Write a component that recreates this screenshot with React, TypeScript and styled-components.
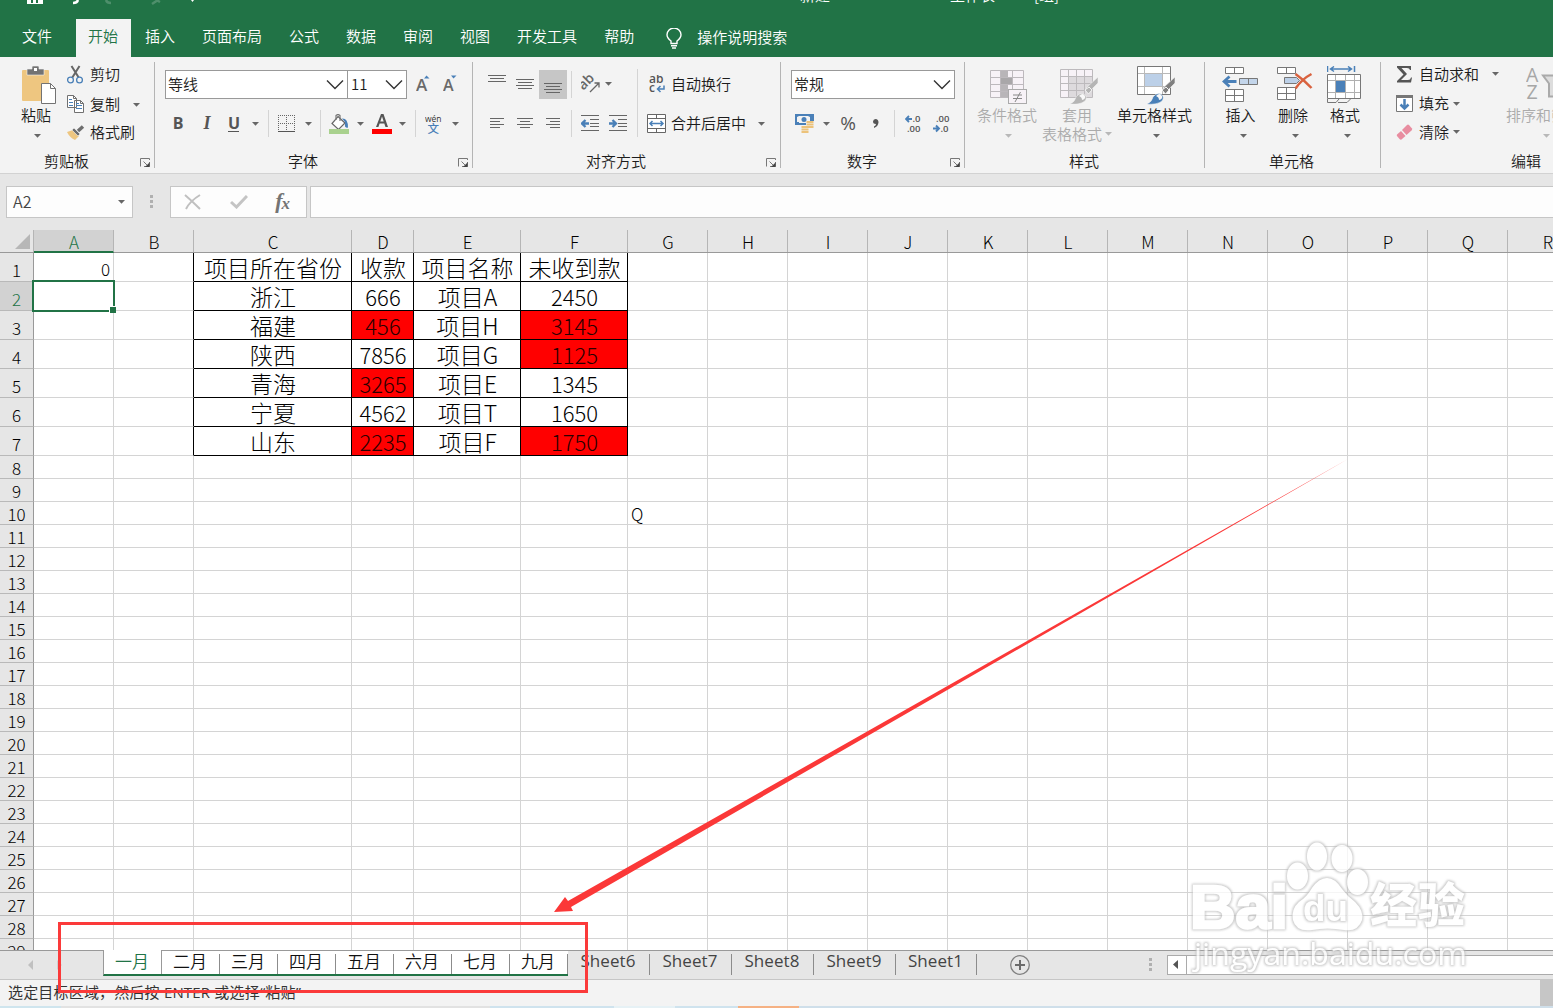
import React from "react";
import styled, { createGlobalStyle } from "styled-components";

const GREEN = "#217346";
const UI = `"Noto Sans CJK SC", "Noto Sans", sans-serif`;
const LATIN = `"Open Sans", "Noto Sans CJK SC", sans-serif`;
const BLUE = "#4a80b8";

const Global = createGlobalStyle`
  * { box-sizing: border-box; }
  body { margin: 0; overflow: hidden; font-family: ${UI}; }
`;

const App_ = styled.div`
  position: relative;
  width: 1553px;
  height: 1008px;
  overflow: hidden;
  display: flex;
  flex-direction: column;
  background: #e6e6e6;
  font-size: 15px;
  font-weight: 350;
  color: #1c1c1c;
  white-space: nowrap;
`;

/* ---------- title and tabs ---------- */
const TitleBar = styled.div`
  flex: none;
  height: 19px;
  background: ${GREEN};
  color: #fff;
  display: flex;
  align-items: flex-start;
  overflow: hidden;
`;
const TitleText = styled.span<{ $gap: number; $w: number }>`
  flex: none;
  width: ${(p) => p.$w}px;
  margin-left: ${(p) => p.$gap}px;
  margin-top: -13px;
  line-height: 16px;
`;
const TabRow = styled.nav`
  flex: none;
  height: 38px;
  background: ${GREEN};
  display: flex;
  align-items: center;
  padding-left: 22px;
`;
const MenuItem = styled.span<{ $gap?: number; $y?: number }>`
  color: #fff;
  margin-left: ${(p) => p.$gap ?? 27}px;
  line-height: 20px;
  padding-top: ${(p) => p.$y ?? 0}px;
  margin-top: -5px;
`;
const ActiveMenu = styled.span`
  width: 55px;
  height: 38px;
  margin-left: 24px;
  background: #f3f3f3;
  color: ${GREEN};
  text-align: center;
  line-height: 33px;
  padding-right: 1px;
`;

/* ---------- ribbon ---------- */
const Ribbon = styled.div`
  flex: none;
  height: 117px;
  background: #f3f3f3;
  border-bottom: 1px solid #d2d2d2;
  display: flex;
`;
const GroupBox = styled.section<{ $w: number }>`
  flex: none;
  width: ${(p) => p.$w}px;
  height: 116px;
  display: flex;
  flex-direction: column;
  background: linear-gradient(#b4b4b4, #b4b4b4) right 5px / 1px 106px no-repeat;
`;
const GroupBody = styled.div<{ $top?: number }>`
  height: 92px;
  display: flex;
  padding-top: ${(p) => p.$top ?? 0}px;
`;
const GroupFoot = styled.footer<{ $x: number }>`
  height: 24px;
  display: flex;
  align-items: center;
  padding-left: ${(p) => p.$x}px;
  line-height: 24px;
`;
const LaunchSlot = styled.span`
  margin-left: auto;
  padding-right: 4px;
  display: flex;
  padding-top: 4px;
`;
const Stack = styled.div<{ $gap?: number; $x?: number }>`
  display: flex;
  flex-direction: column;
  flex: none;
  gap: ${(p) => p.$gap ?? 0}px;
  padding-left: ${(p) => p.$x ?? 0}px;
`;
const Line = styled.div<{ $h: number }>`
  height: ${(p) => p.$h}px;
  display: flex;
  align-items: center;
`;
const Svg = styled.svg<{ $gap?: number }>`
  flex: none;
  display: block;
  margin-left: ${(p) => p.$gap ?? 0}px;
`;
const Divider = styled.i<{ $gap: number; $h?: number }>`
  flex: none;
  width: 1px;
  height: ${(p) => p.$h ?? 27}px;
  margin-left: ${(p) => p.$gap}px;
  background: #d4d4d4;
`;
const CmdText = styled.span<{ $gap?: number }>`
  flex: none;
  margin-left: ${(p) => p.$gap ?? 0}px;
  line-height: 20px;
  margin-top: -1px;
`;
const BigTool = styled.div<{ $w: number; $dim?: boolean; $gap?: number }>`
  flex: none;
  width: ${(p) => p.$w}px;
  margin-left: ${(p) => p.$gap ?? 0}px;
  height: 92px;
  display: flex;
  flex-direction: column;
  align-items: center;
  color: ${(p) => (p.$dim ? "#ababab" : "#1c1c1c")};
`;
const BigArt = styled.div<{ $top?: number }>`
  height: 48px;
  display: flex;
  align-items: flex-start;
  padding-top: ${(p) => p.$top ?? 9}px;
`;
const BigLabel = styled.div`
  height: 19px;
  line-height: 19px;
  display: flex;
  align-items: center;
`;
const CaretSlot = styled.div<{ $shift?: number }>`
  height: 20px;
  padding-top: 10px;
  padding-left: ${(p) => p.$shift ?? 0}px;
`;
const Combo = styled.div<{ $w: number; $gap?: number }>`
  flex: none;
  width: ${(p) => p.$w}px;
  height: 29px;
  margin-left: ${(p) => p.$gap ?? 0}px;
  border: 1px solid #999;
  background: #fff;
  display: flex;
  align-items: center;
  justify-content: space-between;
  padding: 0 3px 0 2px;
`;
const ComboText = styled.span`
  line-height: 20px;
  margin-top: -1px;
`;
const Glyph = styled.span<{ $gap: number; $w: number; $italic?: boolean; $line?: boolean }>`
  flex: none;
  margin-left: ${(p) => p.$gap}px;
  width: ${(p) => p.$w}px;
  text-align: center;
  font: ${(p) => (p.$italic ? `italic bold 18px "Liberation Serif", serif` : `bold 16px "Open Sans", sans-serif`)};
  line-height: ${(p) => (p.$line ? 15 : 18)}px;
  margin-top: ${(p) => (p.$line ? 1 : -1)}px;
  border-bottom: ${(p) => (p.$line ? "1px solid #555" : "none")};
  color: #555;
`;
const PercentGlyph = styled.span`
  flex: none;
  margin: -2px 0 0 10px;
  width: 16px;
  font: 19px/20px "Open Sans", sans-serif;
  color: #555;
  display: flex;
  justify-content: center;
`;
const ActiveTool = styled.span`
  flex: none;
  width: 28px;
  height: 29px;
  margin-left: 5px;
  background: #c6c6c6;
  display: flex;
  padding: 13px 0 0 5px;
`;

/* ---------- formula bar ---------- */
const FormulaBar = styled.div`
  flex: none;
  height: 56px;
  display: flex;
  padding: 12px 0 0 6px;
`;
const Field = styled.div<{ $w: number; $gap?: number }>`
  flex: none;
  width: ${(p) => p.$w}px;
  height: 32px;
  margin-left: ${(p) => p.$gap ?? 0}px;
  background: #fdfdfd;
  border: 1px solid #c6c6c6;
  display: flex;
  align-items: center;
  color: #444;
  padding: 0 7px 0 6px;
  justify-content: space-between;
  font: 350 16px/28px ${UI};
`;
const CellName = styled.span`
  margin-top: -2px;
`;
const Fx = styled.span`
  font: italic bold 22px/24px "Liberation Serif", serif;
  color: #747474;
  letter-spacing: -1px;
  padding-right: 10px;
  sub { font-size: 17px; vertical-align: -1px; }
`;

/* ---------- sheet ---------- */
const Sheet = styled.main`
  position: relative;
  flex: none;
  height: 720px;
  width: 1553px;
  overflow: hidden;
  background: #fff;
`;
const HeadRow = styled.div`
  display: flex;
  height: 23px;
  width: 1600px;
  border-bottom: 1px solid #999;
  background: #e6e6e6;
`;
const Corner = styled.div`
  flex: none;
  width: 34px;
  height: 22px;
  padding: 4px 0 0 15px;
  border-right: 1px solid #b5b5b5;
`;
const ColHead = styled.div<{ $w: number; $on?: boolean }>`
  flex: none;
  width: ${(p) => p.$w}px;
  height: ${(p) => (p.$on ? 23 : 22)}px;
  padding-left: 1px;
  text-align: center;
  font-size: 17px;
  font-weight: 300;
  line-height: 23px;
  color: ${(p) => (p.$on ? GREEN : "#000")};
  background: ${(p) => (p.$on ? "#d2d2d2" : "transparent")};
  border-right: 1px solid #b5b5b5;
  border-bottom: ${(p) => (p.$on ? `2px solid ${GREEN}` : "none")};
`;
const GridRow = styled.div<{ $h: number }>`
  display: flex;
  height: ${(p) => p.$h}px;
`;
const RowHead = styled.div<{ $on?: boolean; $tall?: boolean }>`
  flex: none;
  width: 34px;
  display: flex;
  align-items: flex-end;
  justify-content: center;
  font-size: 17px;
  font-weight: 300;
  line-height: ${(p) => (p.$tall ? 22 : 20)}px;
  color: ${(p) => (p.$on ? GREEN : "#000")};
  background: ${(p) => (p.$on ? "#d2d2d2" : "#e6e6e6")};
  border-right: 1px solid #999;
  border-bottom: 1px solid #b9b9b9;
`;
const Cell = styled.div<{ $w: number; $right?: boolean; $all?: boolean; $red?: boolean }>`
  flex: none;
  width: ${(p) => p.$w}px;
  border-right: 1px solid ${(p) => (p.$right || p.$all ? "#000" : "#d4d4d4")};
  border-bottom: 1px solid ${(p) => (p.$all ? "#000" : "#d4d4d4")};
  background: ${(p) => (p.$red ? "#ff0000" : "#fff")};
  color: ${(p) => (p.$red ? "#2a0000" : "#000")};
`;
const Big = styled.div<{ $num?: boolean }>`
  height: 28px;
  font-size: ${(p) => (p.$num ? 22 : 23)}px;
  font-weight: 300;
  line-height: 28px;
  padding-left: 1px;
  text-align: center;
`;
const Small = styled.div<{ $end?: boolean }>`
  font-size: 17px;
  font-weight: 300;
  line-height: ${(p) => (p.$end ? 32 : 24)}px;
  height: 22px;
  padding: 0 3px;
  text-align: ${(p) => (p.$end ? "right" : "left")};
`;
const Selection = styled.div`
  position: absolute;
  left: 32px;
  top: 50px;
  width: 83px;
  height: 32px;
  border: 2px solid ${GREEN};
  &::after {
    content: "";
    position: absolute;
    right: -3px;
    bottom: -3px;
    width: 6px;
    height: 6px;
    background: ${GREEN};
    border: solid #fff;
    border-width: 1px 0 0 1px;
  }
`;

/* ---------- sheet tabs and status ---------- */
const TabStrip = styled.div`
  flex: none;
  height: 30px;
  border-top: 1px solid #999;
  border-bottom: 1px solid #c6c6c6;
  background: #e6e6e6;
  display: flex;
`;
const NavArrows = styled.div`
  flex: none;
  width: 103px;
  padding: 9px 0 0 28px;
  display: flex;
  gap: 24px;
`;
const MonthTab = styled.div<{ $on?: boolean }>`
  position: relative;
  flex: none;
  width: ${(p) => (p.$on ? 59 : 58)}px;
  height: ${(p) => (p.$on ? 26 : 25)}px;
  margin-top: ${(p) => (p.$on ? -1 : 0)}px;
  padding-top: ${(p) => (p.$on ? 1 : 0)}px;
  padding-right: 2px;
  text-align: center;
  font-size: 17px;
  line-height: 19px;
  color: ${(p) => (p.$on ? GREEN : "#111")};
  border-bottom: 2px solid ${GREEN};
  border-left: ${(p) => (p.$on ? "1px solid #999" : "none")};
  background: ${(p) =>
    p.$on
      ? "linear-gradient(#999, #999) right 0 / 1px 24px no-repeat, #fff"
      : "linear-gradient(#8c8c8c, #8c8c8c) right 3px / 1px 21px no-repeat, #fff"};
`;
const SheetTab = styled.div<{ $w: number }>`
  flex: none;
  width: ${(p) => p.$w}px;
  height: 24px;
  padding-right: 2px;
  text-align: center;
  font: 17px/20px ${LATIN};
  letter-spacing: 0.1px;
  color: #444;
  background: linear-gradient(#8c8c8c, #8c8c8c) right 3px / 1px 21px no-repeat;
`;
const ScrollBox = styled.div<{ $w: number; $gap: number }>`
  flex: none;
  width: ${(p) => p.$w}px;
  height: 20px;
  margin: 4px 0 0 ${(p) => p.$gap}px;
  background: #fff;
  border: 1px solid #ababab;
  padding: 4px 0 0 5px;
`;
const Status = styled.footer`
  flex: none;
  height: 26px;
  background: #f3f3f3;
  display: flex;
  justify-content: space-between;
  padding-left: 8px;
  font: 400 15px/25px ${LATIN};
  letter-spacing: 0.18px;
  color: #333;
`;
const StatusEnd = styled.i`
  width: 13px;
  height: 26px;
  background: #c6c6c6;
`;
const Desk = styled.div`
  flex: none;
  height: 2px;
  display: flex;
`;
const Strip = styled.i<{ $w: number; $c: string }>`
  flex: none;
  width: ${(p) => p.$w}px;
  background: ${(p) => p.$c};
`;
const Overlay = styled.svg`
  position: absolute;
  left: 0;
  top: 0;
  pointer-events: none;
`;

/* ---------- small drawings ---------- */
const Caret = ({ gap = 0, dim = false }: { gap?: number; dim?: boolean }) => (
  <Svg $gap={gap} width="7" height="4" viewBox="0 0 7 4">
    <path d="M0 0H7L3.5 3.8Z" fill={dim ? "#b8b8b8" : "#666"} />
  </Svg>
);
const Chevron = () => (
  <Svg width="18" height="11" viewBox="0 0 18 11">
    <path d="M1 1.500L9 9.500L17 1.500" fill="none" stroke="#333" strokeWidth="1.4" />
  </Svg>
);
const Launcher = () => (
  <LaunchSlot>
    <Svg width="11" height="10" viewBox="0 0 11 10">
      <path d="M.5 8.500V.5H9.500V2M3.500 3.500L8 8M9.500 4V8.500H4" fill="none" stroke="#777" />
      <path d="M9.500 4.500V9H5Z" fill="#444" />
    </Svg>
  </LaunchSlot>
);
/* Text lines of the alignment buttons: each row is [start, length]. */
const Lines = ({ gap = 0, rows, w = 18 }: { gap?: number; rows: [number, number][]; w?: number }) => (
  <Svg $gap={gap} width={w} height={rows.length * 3 - 1} viewBox={`0 0 ${w} ${rows.length * 3 - 1}`}>
    {rows.map(([x, len], i) => (
      <path key={i} d={`M${x} ${i * 3 + 0.5}h${len}`} stroke="#666" />
    ))}
  </Svg>
);
const Dots = ({ gap }: { gap: number }) => (
  <Svg $gap={gap} width="3" height="32" viewBox="0 0 3 32">
    <path d="M0 9h3v3H0zM0 14h3v3H0zM0 19h3v3H0z" fill="#b0b0b0" />
  </Svg>
);
const Group = ({
  w, x, title, launch, top, children,
}: { w: number; x: number; title: string; launch?: boolean; top?: number; children: React.ReactNode }) => (
  <GroupBox $w={w}>
    <GroupBody $top={top}>{children}</GroupBody>
    <GroupFoot $x={x}>{title}{launch && <Launcher />}</GroupFoot>
  </GroupBox>
);

const PasteIcon = () => (
  <Svg $gap={6} width="36" height="40" viewBox="0 0 36 40">
    <rect x="1" y="5" width="27" height="31" rx="1" fill="#eec680" />
    <path d="M6 4h5V2q0-1 1-1h5q1 0 1 1v2h5v6H6z" fill="#737373" stroke="#f3f3f3" strokeWidth=".6" />
    <rect x="13" y="3" width="3" height="3" fill="#fff" />
    <path d="M20.500 18.500h9l5 5v15h-14z" fill="#fff" stroke="#737373" />
    <path d="M29.500 18.500v5h5" fill="none" stroke="#737373" />
  </Svg>
);
const CutIcon = () => (
  <Svg width="18" height="19" viewBox="0 0 18 19">
    <path d="M4.500 1L12 13M12.500 1L5 13" stroke="#666" strokeWidth="2" />
    <circle cx="3.500" cy="15" r="2.900" fill="#f3f3f3" stroke={BLUE} strokeWidth="1.300" />
    <circle cx="12.500" cy="15" r="2.900" fill="#f3f3f3" stroke={BLUE} strokeWidth="1.300" />
  </Svg>
);
const CopyIcon = () => (
  <Svg width="18" height="19" viewBox="0 0 18 19">
    <path d="M.5.5h6l3 3v9h-9zM7.500 5.500h6l3 3v9h-9z" fill="#fff" stroke="#707070" />
    <path d="M6.500.5v3h3M13.500 5.500v3h3" fill="none" stroke="#707070" />
    <path d="M2 4.500h3M2 7.500h4M2 10.500h4M9 10.500h6M9 13.500h6M9 8.500h3" stroke={BLUE} />
  </Svg>
);
const PainterIcon = () => (
  <Svg width="18" height="15" viewBox="0 0 18 15">
    <path d="M0 7L6 5L12 11L8 15Q3 13 0 7Z" fill="#eec680" />
    <path d="M7 3L13 9L11 11L5 5Z" fill="#6e6e6e" stroke="#f3f3f3" strokeWidth=".6" />
    <path d="M11 6L16 1.500" stroke="#6e6e6e" strokeWidth="3.500" />
  </Svg>
);
const BorderIcon = () => (
  <Svg $gap={9} width="18" height="18" viewBox="0 0 18 18">
    <path d="M.5 0v16M16.500 0v16M8.500 0v16M0 .5h17M0 8.500h17" stroke="#666" strokeDasharray="1 1" />
    <path d="M0 16.500h17" stroke="#555" />
  </Svg>
);
const BucketIcon = () => (
  <Svg $gap={8} width="20" height="20" viewBox="0 0 20 20">
    <path d="M9 2.500L16 9L9.500 15.500L3 9.500Z" fill="#fff" stroke="#666" strokeWidth="1.200" />
    <path d="M7 6V1.500q2-2 4 0V7" fill="none" stroke="#777" strokeWidth="1.200" />
    <path d="M13 4.500q6-.5 6 9q-1.500 1-3-1V8z" fill={BLUE} />
    <rect y="15" width="20" height="5" fill="#a9d18e" />
  </Svg>
);
const FontColorIcon = () => (
  <Svg $gap={8} width="20" height="20" viewBox="0 0 20 20">
    <path d="M4 13L9 0h2.500L16 13h-2.500l-1.200-3.500H7.600L6.400 13zM8.300 7.500h3.400L10 2.500z" fill="#555" />
    <rect y="15" width="20" height="5" fill="#f00" />
  </Svg>
);
const SizeIcon = ({ gap, up, size }: { gap: number; up?: boolean; size: number }) => (
  <Svg $gap={gap} width="15" height="19" viewBox="0 0 15 19">
    <text x="0" y="16" fontFamily="Open Sans" fontWeight="600" fontSize={size} fill="#6a6a6a">A</text>
    <path d={up ? "M8 3.500L10.500 .5L13.500 3.500Z" : "M8 .5H13.500L10.500 3.500Z"} fill={BLUE} />
  </Svg>
);
const PinyinIcon = () => (
  <Svg $gap={9} width="18" height="20" viewBox="0 0 18 20">
    <text x="0" y="8" fontFamily="Open Sans" fontWeight="500" fontSize="8.500" fill="#333">wén</text>
    <text x="2.500" y="19" fontFamily="Noto Sans CJK SC" fontSize="11.500" fontWeight="500" fill={BLUE}>文</text>
  </Svg>
);
const OrientIcon = () => (
  <Svg $gap={9} width="20" height="18" viewBox="0 0 20 18">
    <text x="-1" y="12" transform="rotate(-45 5 10)" fontFamily="Open Sans" fontWeight="600" fontSize="14" fill="#666">ab</text>
    <path d="M9 17L18 8M13.500 8h4.500v4.500" fill="none" stroke="#666" strokeWidth="1.300" />
  </Svg>
);
const IndentIcon = ({ gap, right }: { gap: number; right?: boolean }) => (
  <Svg $gap={gap} width="18" height="17" viewBox="0 0 18 17">
    <path d="M0 .5h18M9 4.500h9M9 8.500h9M9 11.500h9M0 15.500h18" stroke="#666" />
    <path d={right ? "M0 8.500H6M3.500 5L7 8.500L3.500 12" : "M8 8.500H2M4.500 5L1 8.500L4.500 12"} fill="none" stroke={BLUE} strokeWidth="2.300" />
  </Svg>
);
const WrapIcon = () => (
  <Svg $gap={11} width="17" height="19" viewBox="0 0 17 19">
    <text x="0" y="8" fontFamily="Open Sans" fontWeight="600" fontSize="12" fill="#555">ab</text>
    <text x="0" y="17" fontFamily="Open Sans" fontWeight="600" fontSize="12" fill="#555">c</text>
    <path d="M15 10.500v3.500H8.500M11.500 11L8.500 14L11.500 17" fill="none" stroke={BLUE} strokeWidth="1.500" />
  </Svg>
);
const MergeIcon = () => (
  <Svg $gap={9} width="20" height="20" viewBox="0 0 20 20">
    <path d="M.5.5h18v18H.5zM.5 4.500h18M.5 14.500h18M9.500.5v4M9.500 15v4" fill="#fff" stroke="#666" />
    <path d="M3 9.500h13M5.500 7L3 9.500L5.500 12M13.500 7L16 9.500L13.500 12" fill="none" stroke={BLUE} strokeWidth="1.500" />
  </Svg>
);
const MoneyIcon = () => (
  <Svg $gap={4} width="20" height="20" viewBox="0 0 20 20">
    <rect width="19" height="11" fill={BLUE} />
    <path d="M2 3v5h2v1h8V8h3V3l-2-1H4z" fill="#f3f3f3" />
    <circle cx="9" cy="5.500" r="2.500" fill={BLUE} />
    <path d="M11 8.500h8M11 11h8M11 13.500h8M6 13h7M6 15.500h7M6 18h7" stroke="#f3f3f3" strokeWidth="3" />
    <path d="M11.500 8h7M11.500 10.500h7M11.500 13h7M6.500 13h7M6.500 15.500h7M6.500 18h7" stroke="#ecc27a" strokeWidth="1.800" />
  </Svg>
);
const CommaIcon = () => (
  <Svg $gap={17} width="6" height="10" viewBox="0 0 6 10">
    <path d="M2.500 0Q5.500 0 5.500 3.500Q5 7.500 1 9V7.500Q3 6.500 3 5Q0 5 0 2.500Q.3 0 2.500 0Z" fill="#555" />
  </Svg>
);
const DecimalIcon = ({ gap, more }: { gap: number; more?: boolean }) => (
  <Svg $gap={gap} width="17" height="18" viewBox="0 0 17 18">
    <g fontFamily="Open Sans" fontSize="9.500" fontWeight="600" fill="#555">
      <text x={more ? 7.5 : 3} y="7">{more ? ".0" : ".00"}</text>
      <text x={more ? 2 : 7.5} y="16.500">{more ? ".00" : ".0"}</text>
    </g>
    <path d={more ? "M7 4H2M4 1L1 4L4 7" : "M0 13.500H5M3 10.500L6 13.500L3 16.500"} fill="none" stroke={BLUE} strokeWidth="1.900" />
  </Svg>
);
const Brush = ({ dim }: { dim?: boolean }) => (
  <g>
    <path d="M38 11V17L30 25L26 22Z" fill={dim ? "#b5b5b5" : "#808080"} stroke="#f3f3f3" strokeWidth=".6" />
    <path d="M29 21L32 24L28.500 28L25 24Z" fill={dim ? "#b5b5b5" : "#808080"} stroke="#f3f3f3" strokeWidth="1" />
    <path d="M10 38Q15 36 16 31Q20 26 24 28Q28 31 25 35Q20 39 10 38Z" fill={dim ? "#b5b5b5" : BLUE} stroke="#f3f3f3" strokeWidth=".5" />
    <path d="M19 30Q23 26 25 30Q26 33 22 34Q22 31 19 30Z" fill="#f8f8f8" />
  </g>
);
const CondIcon = () => (
  <Svg $gap={4} width="38" height="38" viewBox="0 0 38 38">
    <path d="M.5 4.500h33v27H.5z" fill="#f7f2f7" />
    <path d="M11 4h7v28h-7z" fill="#b8b5b8" />
    <path d="M11 12h11v6H11z" fill="#a9a7a9" />
    <path d="M.5 4.500h33v27H.5zM.5 11.500h33M.5 18.500h33M.5 25.500h33M10.500 4.500v27M22.500 4.500v27" fill="none" stroke="#bdb9bd" />
    <rect x="18.500" y="23.500" width="18" height="14" fill="#f7f2f7" stroke="#aaa" />
    <path d="M23 29h9M23 32.500h9M30.500 26L25 36" stroke="#888" />
  </Svg>
);
const TableIcon = () => (
  <Svg $gap={5} width="39" height="38" viewBox="0 0 39 38">
    <path d="M.5 3.500h32v28H.5z" fill="#f7f2f7" />
    <path d="M8 11h24v21H8z" fill="#dddadd" />
    <path d="M.5 3.500h32v28H.5zM.5 10.500h32M.5 17.500h32M.5 24.500h32M8.500 3.500v28M16.500 3.500v28M24.500 3.500v28" fill="none" stroke="#bdbabd" />
    <Brush dim />
  </Svg>
);
const CellStyleIcon = () => (
  <Svg $gap={3} width="39" height="39" viewBox="0 0 39 39">
    <path d="M.5.5h33v28H.5z" fill="#fff" />
    <path d="M8 8h17v12H8z" fill="#bcd0e8" />
    <path d="M.5 7.500h33M.5 20.500h33M7.500.5v28M25.500.5v28" fill="none" stroke="#b9b9b9" />
    <path d="M.5.5h33v28H.5z" fill="none" stroke="#777" />
    <Brush />
  </Svg>
);
const InsertIcon = () => (
  <Svg width="37" height="37" viewBox="0 0 37 37">
    <path d="M3.500 1.500h18v6h-18zM12.500 1.500v6M3.500 23.500h18v12h-18zM3.500 29.500h18M12.500 23.500v12" fill="#fff" stroke="#777" />
    <path d="M17.500 12.500h18v6h-18zM26.500 12.500v6" fill="#c3d5ea" stroke="#777" />
    <path d="M14.500 15.500H3M7.500 10.500L2 15.500L7.500 20.500" fill="none" stroke={BLUE} strokeWidth="2.800" />
  </Svg>
);
const DeleteIcon = () => (
  <Svg $gap={4} width="36" height="36" viewBox="0 0 36 36">
    <path d="M.5 1.500h18v6H.5zM9.500 1.500v6M.5 21.500h18v12H.5zM.5 27.500h18M9.500 21.500v12" fill="#fff" stroke="#777" />
    <path d="M7.500 11.500h12l3 3l-3 3h-12z" fill="#bcd0e8" stroke="#777" />
    <path d="M18.500 8Q27 14 34.500 22M34.500 8Q25 13 18.500 22.500" fill="none" stroke="#d9623f" strokeWidth="2.500" />
  </Svg>
);
const FormatIcon = () => (
  <Svg width="36" height="39" viewBox="0 0 36 39">
    <path d="M.5 0v6M27.500 0v6M4 3h20M7 .5L3.500 3L7 5.500M21 .5L24.500 3L21 5.500" fill="none" stroke={BLUE} strokeWidth="1.500" />
    <path d="M.5 8.500h33v24h-33z" fill="#fff" />
    <path d="M.5 14.500h33M.5 26.500h33M8.500 8.500v24M18.500 8.500v24M27.500 8.500v24" stroke="#b0b0b0" />
    <path d="M.5 8.500h33v24h-33zM.5 33v3.500H9l3-3.500M11 36.500h9l4-4" fill="none" stroke="#777" />
    <rect x="9" y="15" width="9" height="11" fill={BLUE} />
  </Svg>
);

/* ---------- data ---------- */
const cols: [string, number][] = [
  ["A", 80], ["B", 80], ["C", 158], ["D", 62], ["E", 107], ["F", 107],
  ..."GHIJKLMNOPQR".split("").map((c) => [c, 80] as [string, number]),
];
const table: string[][] = [
  ["项目所在省份", "收款", "项目名称", "未收到款"],
  ["浙江", "666", "项目A", "2450"],
  ["福建", "456", "项目H", "3145"],
  ["陕西", "7856", "项目G", "1125"],
  ["青海", "3265", "项目E", "1345"],
  ["宁夏", "4562", "项目T", "1650"],
  ["山东", "2235", "项目F", "1750"],
];
const reds = new Set(["2D", "4D", "6D", "2F", "3F", "6F"]);
const months = ["一月", "二月", "三月", "四月", "五月", "六月", "七月", "九月"];
const sheets = ["Sheet6", "Sheet7", "Sheet8", "Sheet9", "Sheet1"];

const cellContent = (row: number, c: number) => {
  if (row === 0 && c === 0) return <Small $end>0</Small>;
  if (row === 9 && c === 6) return <Small>Q</Small>;
  if (row < 7 && c >= 2 && c <= 5) {
    const v = table[row][c - 2];
    return <Big $num={/^\d+$/.test(v)}>{v}</Big>;
  }
  return null;
};

export default function App() {
  return (
    <App_>
      <Global />
      <TitleBar>
        <Svg $gap={27} width="170" height="7" viewBox="0 0 170 7">
          <path d="M0 0h16v4H0z" fill="#fff" />
          <path d="M4 0h2v3H4zM9 0h2v3H9z" fill={GREEN} />
          <path d="M51 0q-1 3-5 3" fill="none" stroke="#fff" strokeWidth="2.500" />
          <path d="M79 0q1 3 5 3M125 4l6-4M129 0l4 2" fill="none" stroke="#4e8f6b" strokeWidth="2.500" />
          <path d="M164 0h3l-1.500 2z" fill="#fff" />
        </Svg>
        <TitleText $gap={603} $w={30}>新建</TitleText>
        <TitleText $gap={120} $w={45}>工作表</TitleText>
        <TitleText $gap={39} $w={30}>[组]</TitleText>
      </TitleBar>
      <TabRow>
        <MenuItem $gap={0}>文件</MenuItem>
        <ActiveMenu>开始</ActiveMenu>
        <MenuItem $gap={14}>插入</MenuItem>
        {["页面布局", "公式", "数据", "审阅", "视图", "开发工具", "帮助"].map((t) => (
          <MenuItem key={t}>{t}</MenuItem>
        ))}
        <Svg $gap={32} width="16" height="21" viewBox="0 0 16 21">
          <path d="M5 15.500V13Q1 10 1 6.800A6.500 6.300 0 0 1 15 6.800Q15 10 11 13V15.500ZM5 17.800h6M6 20h4" fill="none" stroke="#fff" strokeWidth="1.400" />
        </Svg>
        <MenuItem $gap={15} $y={3}>操作说明搜索</MenuItem>
      </TabRow>

      <Ribbon>
        <Group w={155} x={44} title="剪贴板" launch>
          <BigTool $w={30} $gap={21}>
            <BigArt $top={8}><PasteIcon /></BigArt>
            <BigLabel>粘贴</BigLabel>
            <CaretSlot $shift={3}><Caret /></CaretSlot>
          </BigTool>
          <Stack $x={16}>
            <Line $h={35}><CutIcon /><CmdText $gap={5}>剪切</CmdText></Line>
            <Line $h={25}><CopyIcon /><CmdText $gap={5}>复制</CmdText><Caret gap={13} /></Line>
            <Line $h={30}><PainterIcon /><CmdText $gap={5}>格式刷</CmdText></Line>
          </Stack>
        </Group>

        <Group w={318} x={133} title="字体" launch top={13}>
          <Stack $gap={11} $x={10}>
            <Line $h={29}>
              <Combo $w={183}><ComboText>等线</ComboText><Chevron /></Combo>
              <Combo $w={60} $gap={-1}><ComboText>&#8202;11</ComboText><Chevron /></Combo>
              <SizeIcon gap={9} up size={17} />
              <SizeIcon gap={12} size={16} />
            </Line>
            <Line $h={27}>
              <Glyph $gap={7} $w={12}>B</Glyph>
              <Glyph $gap={17} $w={12} $italic>I</Glyph>
              <Glyph $gap={15} $w={11} $line>U</Glyph>
              <Caret gap={13} />
              <Divider $gap={9} />
              <BorderIcon />
              <Caret gap={9} />
              <Divider $gap={8} />
              <BucketIcon />
              <Caret gap={8} />
              <FontColorIcon />
              <Caret gap={7} />
              <Divider $gap={9} />
              <PinyinIcon />
              <Caret gap={9} />
            </Line>
          </Stack>
        </Group>

        <Group w={308} x={113} title="对齐方式" launch top={12}>
          <Stack $gap={11} $x={15}>
            <Line $h={30}>
              <Svg width="18" height="18" viewBox="0 0 18 18"><path d="M0 .5h18M2 3.500h14M0 6.500h18" stroke="#666" /></Svg>
              <Lines gap={10} rows={[[0, 18], [2, 14], [0, 18], [2, 14]]} />
              <ActiveTool><Lines rows={[[0, 18], [2, 14], [0, 18], [2, 14]]} /></ActiveTool>
              <Divider $gap={4} />
              <OrientIcon />
              <Caret gap={4} />
            </Line>
            <Line $h={27}>
              <Lines gap={2} w={14} rows={[[0, 14], [0, 10], [0, 14], [0, 10]]} />
              <Lines gap={13} w={16} rows={[[0, 16], [3, 10], [0, 16], [3, 10]]} />
              <Lines gap={13} w={14} rows={[[0, 14], [4, 10], [0, 14], [4, 10]]} />
              <Divider $gap={11} />
              <IndentIcon gap={9} />
              <IndentIcon gap={10} right />
            </Line>
          </Stack>
          <Divider $gap={10} $h={68} />
          <Stack $gap={11}>
            <Line $h={30}><WrapIcon /><CmdText $gap={5}>自动换行</CmdText></Line>
            <Line $h={27}><MergeIcon /><CmdText $gap={4}>合并后居中</CmdText><Caret gap={12} /></Line>
          </Stack>
        </Group>

        <Group w={184} x={66} title="数字" launch top={13}>
          <Stack $gap={11} $x={10}>
            <Line $h={29}><Combo $w={164}><ComboText>常规</ComboText><Chevron /></Combo></Line>
            <Line $h={27}>
              <MoneyIcon />
              <Caret gap={8} />
              <PercentGlyph>%</PercentGlyph>
              <CommaIcon />
              <Divider $gap={15} />
              <DecimalIcon gap={10} more />
              <DecimalIcon gap={11} />
            </Line>
          </Stack>
        </Group>

        <Group w={240} x={104} title="样式">
          <BigTool $w={60} $gap={12} $dim>
            <BigArt><CondIcon /></BigArt>
            <BigLabel>条件格式</BigLabel>
            <CaretSlot $shift={3}><Caret dim /></CaretSlot>
          </BigTool>
          <BigTool $w={76} $gap={2} $dim>
            <BigArt><TableIcon /></BigArt>
            <BigLabel>套用</BigLabel>
            <BigLabel>表格格式<Caret gap={3} dim /></BigLabel>
          </BigTool>
          <BigTool $w={75} $gap={2}>
            <BigArt><CellStyleIcon /></BigArt>
            <BigLabel>单元格样式</BigLabel>
            <CaretSlot $shift={4}><Caret /></CaretSlot>
          </BigTool>
        </Group>

        <Group w={176} x={64} title="单元格">
          <BigTool $w={37} $gap={17}>
            <BigArt><InsertIcon /></BigArt>
            <BigLabel>插入</BigLabel>
            <CaretSlot $shift={5}><Caret /></CaretSlot>
          </BigTool>
          <BigTool $w={36} $gap={16}>
            <BigArt><DeleteIcon /></BigArt>
            <BigLabel>删除</BigLabel>
            <CaretSlot $shift={4}><Caret /></CaretSlot>
          </BigTool>
          <BigTool $w={36} $gap={16}>
            <BigArt><FormatIcon /></BigArt>
            <BigLabel>格式</BigLabel>
            <CaretSlot $shift={4}><Caret /></CaretSlot>
          </BigTool>
        </Group>

        <Group w={200} x={130} title="编辑">
          <Stack $x={15}>
            <Line $h={34}>
              <Svg width="18" height="17" viewBox="0 0 18 17">
                <path d="M1 0H15V4H14Q13.500 2 11 2H5.500L11 8L5 14H12Q14.500 14 15 11.500H16L15 16.500H1V15L7.500 8.500L1 1.500Z" fill="#555" />
              </Svg>
              <CmdText $gap={5}>自动求和</CmdText><Caret gap={13} />
            </Line>
            <Line $h={25}>
              <Svg width="18" height="18" viewBox="0 0 18 18">
                <path d="M.5.5h16v16H.5z" fill="#fff" stroke="#777" />
                <path d="M0 0h17v3H0z" fill="#777" />
                <path d="M8.500 4v9M4.500 9.500L8.500 13.500L12.500 9.500" fill="none" stroke={BLUE} strokeWidth="2.500" />
              </Svg>
              <CmdText $gap={5}>填充</CmdText><Caret gap={4} />
            </Line>
            <Line $h={32}>
              <Svg width="18" height="17" viewBox="0 0 18 17">
                <path d="M6 6L11 1Q12 0 13 1L16 4.500Q16.500 5.500 15.500 6.500L10.500 11Z" fill="#e88da0" />
                <path d="M5 7L9.500 12L5.500 15.500Q4.500 16 3.500 15L1 12Q.5 11 1 10.500Z" fill="#e88da0" />
              </Svg>
              <CmdText $gap={5}>清除</CmdText><Caret gap={4} />
            </Line>
          </Stack>
          <BigTool $w={75} $gap={7} $dim>
            <BigArt>
              <Svg width="36" height="36" viewBox="0 0 36 36">
                <g fontFamily="Open Sans" fontSize="19.500" fontWeight="500" fill="#a6a6a6">
                  <text x="0" y="16">A</text>
                  <text x="0.500" y="33">Z</text>
                </g>
                <path d="M17 9.500h17l-6 8v13h-5v-13z" fill="#ddd" stroke="#aaa" strokeWidth="2" />
              </Svg>
            </BigArt>
            <BigLabel>排序和筛选</BigLabel>
            <CaretSlot $shift={5}><Caret dim /></CaretSlot>
          </BigTool>
        </Group>
      </Ribbon>

      <FormulaBar>
        <Field $w={127}><CellName>A2</CellName><Caret /></Field>
        <Dots gap={17} />
        <Field $w={137} $gap={17}>
          <Svg $gap={7} width="18" height="16" viewBox="0 0 18 16"><path d="M1 1Q8 7 16 15M16 1Q6 7 2 15" fill="none" stroke="#c0c0c0" strokeWidth="2" /></Svg>
          <Svg width="18" height="14" viewBox="0 0 18 14"><path d="M1 7L6.500 12L17 1" fill="none" stroke="#c4c4c4" strokeWidth="3" /></Svg>
          <Fx>f<sub>x</sub></Fx>
        </Field>
        <Field $w={1260} $gap={3} />
      </FormulaBar>

      <Sheet>
        <HeadRow>
          <Corner><Svg width="15" height="15" viewBox="0 0 15 15"><path d="M15 0V15H0Z" fill="#b7b7b7" /></Svg></Corner>
          {cols.map(([c, w], i) => <ColHead key={c} $w={w} $on={i === 0}>{c}</ColHead>)}
        </HeadRow>
        {Array.from({ length: 29 }, (_, r) => (
          <GridRow key={r} $h={r < 7 ? 29 : 23}>
            <RowHead $on={r === 1} $tall={r < 7}>{r + 1}</RowHead>
            {cols.map(([c, w], i) => (
              <Cell key={c} $w={w} $right={r < 7 && i === 1} $all={r < 7 && i >= 2 && i <= 5} $red={reds.has(r + c)}>
                {cellContent(r, i)}
              </Cell>
            ))}
          </GridRow>
        ))}
        <Selection />
      </Sheet>

      <TabStrip>
        <NavArrows>
          <Svg width="5" height="10" viewBox="0 0 5 10"><path d="M5 0V10L0 5Z" fill="#c0c0c0" /></Svg>
          <Svg width="5" height="10" viewBox="0 0 5 10"><path d="M0 0V10L5 5Z" fill="#cfcfcf" /></Svg>
        </NavArrows>
        {months.map((m, i) => <MonthTab key={m} $on={i === 0}>{m}</MonthTab>)}
        {sheets.map((s, i) => <SheetTab key={s} $w={i === 4 ? 81 : 82}>{s}</SheetTab>)}
        <Svg $gap={32} width="22" height="28" viewBox="0 0 22 28">
          <circle cx="11" cy="14" r="9.300" fill="none" stroke="#808080" strokeWidth="1.300" />
          <path d="M11 9v10M6 14h10" stroke="#6a6a6a" strokeWidth="2" />
        </Svg>
        <Svg $gap={118} width="3" height="28" viewBox="0 0 3 28"><path d="M0 7h3v3H0zM0 12h3v3H0zM0 17h3v3H0z" fill="#b0b0b0" /></Svg>
        <ScrollBox $w={20} $gap={15}><Svg width="5" height="9" viewBox="0 0 5 9"><path d="M5 0V9L0 4.500Z" fill="#555" /></Svg></ScrollBox>
        <ScrollBox $w={380} $gap={-1} />
      </TabStrip>
      <Status>选定目标区域，然后按 ENTER 或选择“粘贴”<StatusEnd /></Status>
      <Desk>
        <Strip $w={61} $c="#cfe5ee" />
        <Strip $w={429} $c="#e2e2e2" />
        <Strip $w={124} $c="#cfe3ee" />
        <Strip $w={61} $c="#e6f1f5" />
        <Strip $w={63} $c="#cfe3ee" />
        <Strip $w={61} $c="#f5b183" />
        <Strip $w={754} $c="#cfdfea" />
      </Desk>

      <Overlay width="1553" height="1008" viewBox="0 0 1553 1008">
        <defs>
          <filter id="halo" x="-10%" y="-10%" width="120%" height="120%">
            <feMorphology in="SourceAlpha" operator="dilate" radius=".8" result="fat" />
            <feGaussianBlur in="fat" stdDeviation=".9" result="soft" />
            <feFlood floodColor="#bcbcbc" />
            <feComposite in2="soft" operator="in" result="rim" />
            <feMerge>
              <feMergeNode in="rim" />
              <feMergeNode in="SourceGraphic" />
            </feMerge>
          </filter>
        </defs>
        <g opacity=".78" fill="#fff" fontFamily="Liberation Sans" fontWeight="bold">
          <g filter="url(#halo)">
            <ellipse cx="1297.500" cy="876" rx="10.500" ry="13.500" />
            <ellipse cx="1317" cy="856.500" rx="10" ry="14" />
            <ellipse cx="1342" cy="858.500" rx="10.500" ry="13.500" />
            <ellipse cx="1357.500" cy="882" rx="10.500" ry="13" />
            <path d="M1327 878Q1335 878 1342 889Q1347 896 1355 902Q1364 911 1362 920Q1358 932 1344 930Q1327 927 1312 930Q1296 932 1293 920Q1291 909 1299 902Q1307 897 1312 888Q1319 878 1327 878Z" />
            <text x="1190" y="927.500" fontSize="62" textLength="98" lengthAdjust="spacingAndGlyphs" stroke="#fff" strokeWidth="2.500">Bai</text>
            <text x="1370" y="922" fontSize="47" textLength="95" fontFamily="Noto Sans CJK SC" fontWeight="900">经验</text>
          </g>
          <text filter="url(#halo)" x="1303" y="921" fontSize="37" textLength="45" lengthAdjust="spacingAndGlyphs">du</text>
          <text filter="url(#halo)" x="1194" y="965" fontSize="31" textLength="273" lengthAdjust="spacingAndGlyphs" fontFamily="Open Sans" fontWeight="500">jingyan.baidu.com</text>
        </g>
        <path d="M1348 459L571 907L573 911L554 912L565 897L568 901Z" fill="#fb3838" />
        <rect x="59.500" y="923.500" width="527" height="68" fill="none" stroke="#fb3a3a" strokeWidth="3" />
      </Overlay>
    </App_>
  );
}
